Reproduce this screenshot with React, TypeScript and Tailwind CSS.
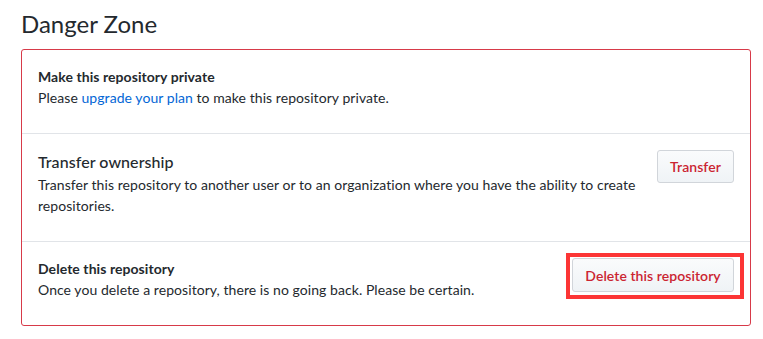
export default function App() {
  return (
    <div
      className="min-h-screen bg-white text-[#24292e] pl-[21px] pr-[12px]"
      style={{ fontFamily: 'Lato, "Noto Sans", sans-serif' }}
    >
      <h2 className="pt-[9px] mb-[10px] text-[24px] leading-[30px] font-normal">Danger Zone</h2>

      <div className="border border-[#d73a49] rounded-[3px] text-[14px] leading-[21px] tracking-[0.06px]">
        <div className="flex items-start pt-4 pb-[25px] px-4">
          <div className="flex-1">
            <div className="font-bold">Make this repository private</div>
            <p>
              Please <a className="text-[#0366d6]">upgrade your plan</a> to make this repository private.
            </p>
          </div>
        </div>

        <div className="flex items-start pt-4 pb-[25px] px-4 border-t border-[#e1e4e8]">
          <div className="flex-1">
            <div className="text-[16px] leading-[24px] font-medium">Transfer ownership</div>
            <p>
              Transfer this repository to another user or to an organization where you have the ability to create
              repositories.
            </p>
          </div>
          <button className="ml-5 h-[33px] w-[77px] rounded-[3px] border border-[#d1d5da] bg-gradient-to-b from-[#fafbfc] to-[#eff3f6] font-semibold text-[#cb2431]">
            Transfer
          </button>
        </div>

        <div className="flex items-start pt-4 pb-[25px] px-4 border-t border-[#e1e4e8]">
          <div className="flex-1">
            <div className="font-bold">Delete this repository</div>
            <p>Once you delete a repository, there is no going back. Please be certain.</p>
          </div>
          <div className="relative">
            <button className="h-[34px] w-[162px] rounded-[3px] border border-[#d1d5da] bg-gradient-to-b from-[#fafbfc] to-[#eff3f6] font-semibold text-[#cb2431]">
              Delete this repository
            </button>
            <span className="pointer-events-none absolute -left-[6px] -top-[5px] -right-[10px] -bottom-[7px] border-4 border-[#fc3535]" />
          </div>
        </div>
      </div>
    </div>
  );
}
